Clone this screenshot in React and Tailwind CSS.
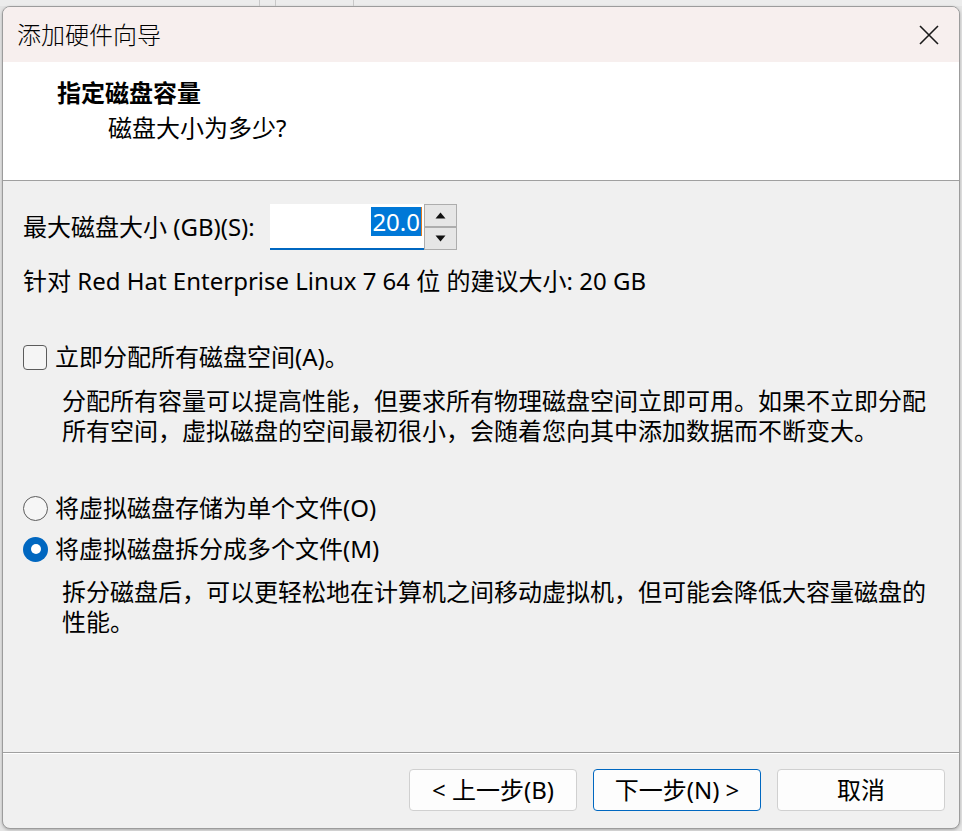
import React from 'react';

const FONT = { fontFamily: '"Noto Sans", "Noto Sans CJK SC", sans-serif' };

// Spinner arrow button for the numeric field
function SpinButton({ up }) {
    return (
        <div className="flex-1 flex items-center justify-center border border-[#adadad] bg-[#e6e6e6]">
            <svg width="11" height="7" viewBox="0 0 11 7">
                {up ? <path d="M5.5 0.5 L10.5 6.5 L0.5 6.5 Z" fill="#111" /> : <path d="M0.5 0.5 L10.5 0.5 L5.5 6.5 Z" fill="#111" />}
            </svg>
        </div>
    );
}

function Radio({ checked }) {
    if (checked) {
        return (
            <span className="w-[25px] h-[25px] rounded-full bg-[#0067c0] flex items-center justify-center flex-shrink-0">
                <span className="w-[10px] h-[10px] rounded-full bg-white" />
            </span>
        );
    }
    return <span className="w-[25px] h-[25px] rounded-full border-[1.5px] border-[#5c5c5c] bg-[#f6f6f6] flex-shrink-0" />;
}

function WizardButton({ children, primary }) {
    return (
        <button className={`w-[168px] h-[42px] rounded-[4px] bg-[#fdfdfd] text-[24px] text-black flex items-center justify-center border ${primary ? 'border-[#0067c0]' : 'border-[#d0d0d0]'}`}>
            {children}
        </button>
    );
}

export default function App() {
    return (
        <div className="w-[962px] h-[831px] overflow-hidden bg-[#e4e4e4] text-black" style={FONT}>
            {/* window behind the dialog */}
            <div className="h-[6px] flex bg-[#ececec]">
                <div className="w-[260px] border-r border-[#c8c8c8]" />
                <div className="w-[16px] border-r border-[#c8c8c8]" />
                <div className="w-[78px] border-r border-[#c8c8c8]" />
            </div>

            <div className="ml-[2px] w-[958px] h-[823px] rounded-[8px] border border-[#9c9c9c] overflow-hidden flex flex-col bg-[#f0f0f0] shadow-[0_1px_3px_rgba(0,0,0,0.25)]">
                {/* title bar */}
                <div className="h-[55px] flex-shrink-0 bg-[#f7efee] flex items-center justify-between pl-[14px] pr-[20px]">
                    <span className="text-[24px] font-light leading-none">添加硬件向导</span>
                    <svg width="20" height="20" viewBox="0 0 20 20">
                        <path d="M1 1 L19 19 M19 1 L1 19" stroke="#1a1a1a" strokeWidth="1.6" />
                    </svg>
                </div>

                {/* header */}
                <div className="h-[119px] flex-shrink-0 bg-white border-b border-[#a0a0a0] pl-[54px] pt-[16px]">
                    <div className="text-[24px] leading-[30px] font-bold">指定磁盘容量</div>
                    <div className="text-[24px] leading-[30px] mt-[5px] pl-[51px]">磁盘大小为多少?</div>
                </div>

                {/* body */}
                <div className="flex-1 px-[20px] pt-[23px] text-[24px] leading-[30px]">
                    <div className="flex items-center">
                        <span className="w-[247px]">最大磁盘大小 (GB)(S):</span>
                        <div className="w-[154px] h-[46px] bg-white border-b-2 border-[#0067c0] flex justify-end items-start pt-[3px] pr-[2px]">
                            <span className="bg-[#0078d7] text-white leading-[29px] px-[1px]">20.0</span>
                            <span className="w-[1px] h-[29px] bg-[#e07a1f]" />
                        </div>
                        <div className="w-[33px] h-[46px] flex flex-col">
                            <SpinButton up />
                            <SpinButton />
                        </div>
                    </div>

                    <div className="mt-[16px]">针对 Red Hat Enterprise Linux 7 64 位 的建议大小: 20 GB</div>

                    <div className="mt-[46px] flex items-center gap-[8px]">
                        <span className="w-[24px] h-[25px] rounded-[4px] border-[1.5px] border-[#5c5c5c] bg-[#f5f5f5] flex-shrink-0" />
                        <span>立即分配所有磁盘空间(A)。</span>
                    </div>
                    <div className="mt-[14px] pl-[39px]">
                        <div>分配所有容量可以提高性能，但要求所有物理磁盘空间立即可用。如果不立即分配</div>
                        <div>所有空间，虚拟磁盘的空间最初很小，会随着您向其中添加数据而不断变大。</div>
                    </div>

                    <div className="mt-[47px] flex items-center gap-[7px]">
                        <Radio />
                        <span>将虚拟磁盘存储为单个文件(O)</span>
                    </div>
                    <div className="mt-[11px] flex items-center gap-[7px]">
                        <Radio checked />
                        <span>将虚拟磁盘拆分成多个文件(M)</span>
                    </div>
                    <div className="mt-[13px] pl-[39px]">
                        <div>拆分磁盘后，可以更轻松地在计算机之间移动虚拟机，但可能会降低大容量磁盘的</div>
                        <div>性能。</div>
                    </div>
                </div>

                {/* footer */}
                <div className="h-[76px] flex-shrink-0 border-t border-[#a0a0a0]">
                    <div className="h-full border-t border-white flex justify-end items-start pt-[15px] pr-[14px] gap-[16px]">
                        <WizardButton>&lt; 上一步(B)</WizardButton>
                        <WizardButton primary>下一步(N) &gt;</WizardButton>
                        <WizardButton>取消</WizardButton>
                    </div>
                </div>
            </div>
        </div>
    );
}
